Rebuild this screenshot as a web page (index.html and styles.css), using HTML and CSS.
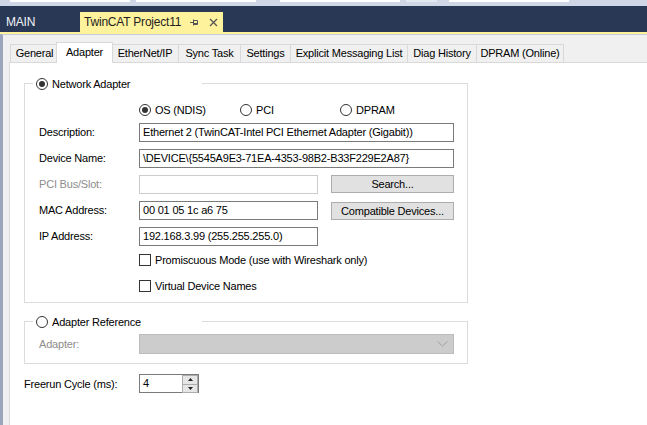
FILE: index.html
```html
<!DOCTYPE html>
<html lang="en">
<head>
    <meta charset="UTF-8">
    <title>TwinCAT Project11 - Adapter</title>
    <link rel="stylesheet" href="styles.css">
</head>
<body>
    <div class="toolbar">
        <span class="tb-box tb-a"></span>
        <span class="tb-box tb-a"></span>
        <span class="tb-box tb-b"></span>
        <span class="tb-box tb-c"></span>
        <span class="tb-box tb-d"></span>
    </div>
    <div class="docbar">
        <div class="doctab">MAIN</div>
        <div class="doctab active">
            <span class="doctitle">TwinCAT Project11</span>
            <svg class="pin" width="9" height="9" viewBox="0 0 9 9">
                <path d="M0 4.5H3M3.5 1.5V7.5M3.5 2.5H7.5V6.5H3.5M3.5 5.5H7.5" stroke="#555" fill="none"/>
            </svg>
            <svg class="close" width="9" height="9" viewBox="0 0 9 9">
                <path d="M1 1L8 8M8 1L1 8" stroke="#555" stroke-width="1.3" fill="none"/>
            </svg>
        </div>
    </div>
    <div class="docline"></div>

    <div class="editor">
        <div class="tabs">
            <div class="tab t-general">General</div>
            <div class="tab selected t-adapter">Adapter</div>
            <div class="tab t-eip">EtherNet/IP</div>
            <div class="tab t-sync">Sync Task</div>
            <div class="tab t-settings">Settings</div>
            <div class="tab t-explicit">Explicit Messaging List</div>
            <div class="tab t-diag">Diag History</div>
            <div class="tab t-dpram">DPRAM (Online)</div>
        </div>

        <div class="page">
            <fieldset class="group group-net">
                <legend><span class="radio checked"></span>Network Adapter</legend>
                <div class="form">
                    <div class="radios">
                        <label class="opt opt-os"><span class="radio checked"></span>OS (NDIS)</label>
                        <label class="opt opt-pci"><span class="radio"></span>PCI</label>
                        <label class="opt"><span class="radio"></span>DPRAM</label>
                    </div>

                    <span class="lbl">Description:</span>
                    <div class="field wide">Ethernet 2 (TwinCAT-Intel PCI Ethernet Adapter (Gigabit))</div>

                    <span class="lbl">Device Name:</span>
                    <div class="field wide">\DEVICE\{5545A9E3-71EA-4353-98B2-B33F229E2A87}</div>

                    <span class="lbl disabled">PCI Bus/Slot:</span>
                    <div class="field disabled"></div>
                    <button class="btn" type="button">Search...</button>

                    <span class="lbl">MAC Address:</span>
                    <div class="field">00 01 05 1c a6 75</div>
                    <button class="btn btn-compat" type="button">Compatible Devices...</button>

                    <span class="lbl">IP Address:</span>
                    <div class="field">192.168.3.99 (255.255.255.0)</div>

                    <label class="check"><span class="box"></span>Promiscuous Mode (use with Wireshark only)</label>
                    <label class="check check-last"><span class="box"></span>Virtual Device Names</label>
                </div>
            </fieldset>

            <fieldset class="group group-ref">
                <legend><span class="radio"></span>Adapter Reference</legend>
                <div class="form form-ref">
                    <span class="lbl disabled">Adapter:</span>
                    <div class="combo">
                        <svg width="11" height="6" viewBox="0 0 11 6">
                            <path d="M0.5 0.5L5.5 5L10.5 0.5" stroke="#a2a2a2" fill="none"/>
                        </svg>
                    </div>
                </div>
            </fieldset>

            <div class="freerun">
                <span class="freerun-lbl">Freerun Cycle (ms):</span>
                <div class="spin">
                    <span class="spin-val">4</span>
                    <div class="spin-btns">
                        <span class="spin-btn"><svg width="5" height="3" viewBox="0 0 5 3"><path d="M0 3L2.5 0L5 3Z" fill="#222"/></svg></span>
                        <span class="spin-btn"><svg width="5" height="3" viewBox="0 0 5 3"><path d="M0 0L2.5 3L5 0Z" fill="#222"/></svg></span>
                    </div>
                </div>
            </div>
        </div>
    </div>
</body>
</html>
```

FILE: styles.css
```css
html, body {
    margin: 0;
    height: 100%;
    overflow: hidden;
}
body {
    font-family: "Liberation Sans", Arial, sans-serif;
    font-size: 11px;
    letter-spacing: -0.2px;
    color: #000;
    background-color: #f0f0f0;
}

/* strip of the IDE toolbar, cut off at the top */
.toolbar {
    display: flex;
    height: 6px;
    background-color: #cfd6e5;
    padding-left: 10px;
    gap: 6px;
}
.tb-box {
    display: block;
    height: 2px;
    background-color: #fff;
}
.tb-a { width: 120px; }
.tb-b { width: 120px; margin-left: 18px; }
.tb-c { width: 31px; background-color: #e3e7ef; }
.tb-d { width: 120px; margin-left: 6px; }

/* document tabs */
.docbar {
    display: flex;
    align-items: flex-end;
    height: 26px;
    background-color: #293955;
}
.doctab {
    flex: none;
    height: 20px;
    line-height: 20px;
    font-size: 12px;
    letter-spacing: -0.2px;
    color: #f2f4f8;
    width: 74px;
    padding-left: 6px;
    white-space: nowrap;
}
.doctab.active {
    display: flex;
    align-items: center;
    width: 139px;
    padding-left: 4px;
    background-color: #fff29d;
    color: #1e1e1e;
}
.doctitle {
    flex: none;
}
.doctab .pin {
    flex: none;
    margin-left: 9px;
}
.doctab .close {
    flex: none;
    margin-left: 10px;
}
.docline {
    height: 2px;
    background-color: #fff29d;
}

/* editor with property tabs */
.editor {
    display: flex;
    flex-direction: column;
    height: calc(100% - 34px);
    border-left: 3px solid #9ba6bd;
    border-top: 1px solid #c6ccd8;
    padding: 7px 0 0 6px;
    box-sizing: border-box;
}
.tabs {
    display: flex;
    align-items: flex-end;
    height: 20px;
    padding-left: 1px;
    position: relative;
    z-index: 1;
}
.tab {
    height: 18px;
    line-height: 17px;
    text-align: center;
    background-color: #f0f0f0;
    border: 1px solid #d9d9d9;
    border-bottom: none;
    margin-right: -1px;
    box-sizing: border-box;
    white-space: nowrap;
}
.tab.selected {
    height: 21px;
    line-height: 18px;
    background-color: #fff;
    margin: 0 -2px -1px -2px;
    position: relative;
    z-index: 2;
}
.t-general { width: 49px; }
.t-adapter { width: 57px; }
.t-eip { width: 68px; }
.t-sync { width: 63px; }
.t-settings { width: 51px; }
.t-explicit { width: 118px; }
.t-diag { width: 70px; }
.t-dpram { width: 88px; }

.page {
    flex: 1;
    background-color: #fff;
    border-top: 1px solid #d9d9d9;
    border-left: 1px solid #d9d9d9;
    padding-left: 14px;
}

/* group boxes */
.group {
    width: 444px;
    box-sizing: border-box;
    border: 1px solid #dcdcdc;
    margin: 0;
    padding: 0 12px 9px 14px;
}
.group-net {
    margin-top: 14px;
    padding-top: 14px;
    padding-bottom: 10px;
}
.group-ref {
    margin-top: 12px;
    padding-top: 6px;
}
.group legend {
    display: flex;
    align-items: center;
    gap: 4px;
    width: 169px;
    height: 13px;
    box-sizing: border-box;
    margin-left: -6px;
    padding: 0 3px;
    background-color: #fff;
}

.radio {
    display: inline-block;
    width: 12px;
    height: 12px;
    border: 1px solid #333;
    border-radius: 50%;
    box-sizing: border-box;
    position: relative;
    flex: none;
}
.radio.checked::after {
    content: "";
    position: absolute;
    left: 2px;
    top: 2px;
    width: 6px;
    height: 6px;
    border-radius: 50%;
    background-color: #333;
}

.form {
    display: grid;
    grid-template-columns: 100px 179px 13px 123px;
    grid-template-rows: 12px 19px 19px 19px 19px 19px 13px 19px;
    row-gap: 7px;
}
.radios {
    grid-column: 2 / 5;
    display: flex;
    align-items: center;
}
.opt {
    display: flex;
    align-items: center;
    gap: 4px;
}
.opt-os { width: 101px; }
.opt-pci { width: 100px; }

.lbl {
    grid-column: 1;
    align-self: center;
    padding-bottom: 1px;
}
.lbl.disabled {
    color: #8d8d8d;
}
.field {
    grid-column: 2;
    border: 1px solid #7a7a7a;
    padding: 0 3px;
    line-height: 17px;
    white-space: nowrap;
    overflow: hidden;
}
.field.wide {
    grid-column: 2 / 5;
}
.field.disabled {
    border-color: #cccccc;
}
.btn {
    grid-column: 4;
    font: inherit;
    letter-spacing: inherit;
    color: #000;
    background-color: #e1e1e1;
    border: 1px solid #adadad;
    padding: 0;
    height: 18px;
    margin: 0;
}
.btn-compat {
    margin-top: 1px;
}
.check {
    grid-column: 2 / 5;
    display: flex;
    align-items: center;
    gap: 4px;
}
.check-last {
    align-self: end;
}
.box {
    width: 12px;
    height: 12px;
    border: 1px solid #333;
    box-sizing: border-box;
}

.form-ref {
    grid-template-rows: 20px;
}
.combo {
    grid-column: 2 / 5;
    display: flex;
    align-items: center;
    justify-content: flex-end;
    padding-right: 5px;
    background-color: #cccccc;
    border: 1px solid #bcbcbc;
}

/* freerun cycle */
.freerun {
    display: flex;
    align-items: center;
    margin-top: 10px;
}
.freerun-lbl {
    width: 115px;
}
.spin {
    display: flex;
    width: 60px;
    height: 19px;
    border: 1px solid #7a7a7a;
    box-sizing: border-box;
}
.spin-val {
    flex: 1;
    padding-left: 3px;
    line-height: 17px;
}
.spin-btns {
    display: flex;
    flex-direction: column;
    width: 16px;
}
.spin-btn {
    flex: 1;
    display: flex;
    align-items: center;
    justify-content: center;
    background-color: #e6e6e6;
    border: 1px solid #acacac;
    margin-bottom: -1px;
}
```
